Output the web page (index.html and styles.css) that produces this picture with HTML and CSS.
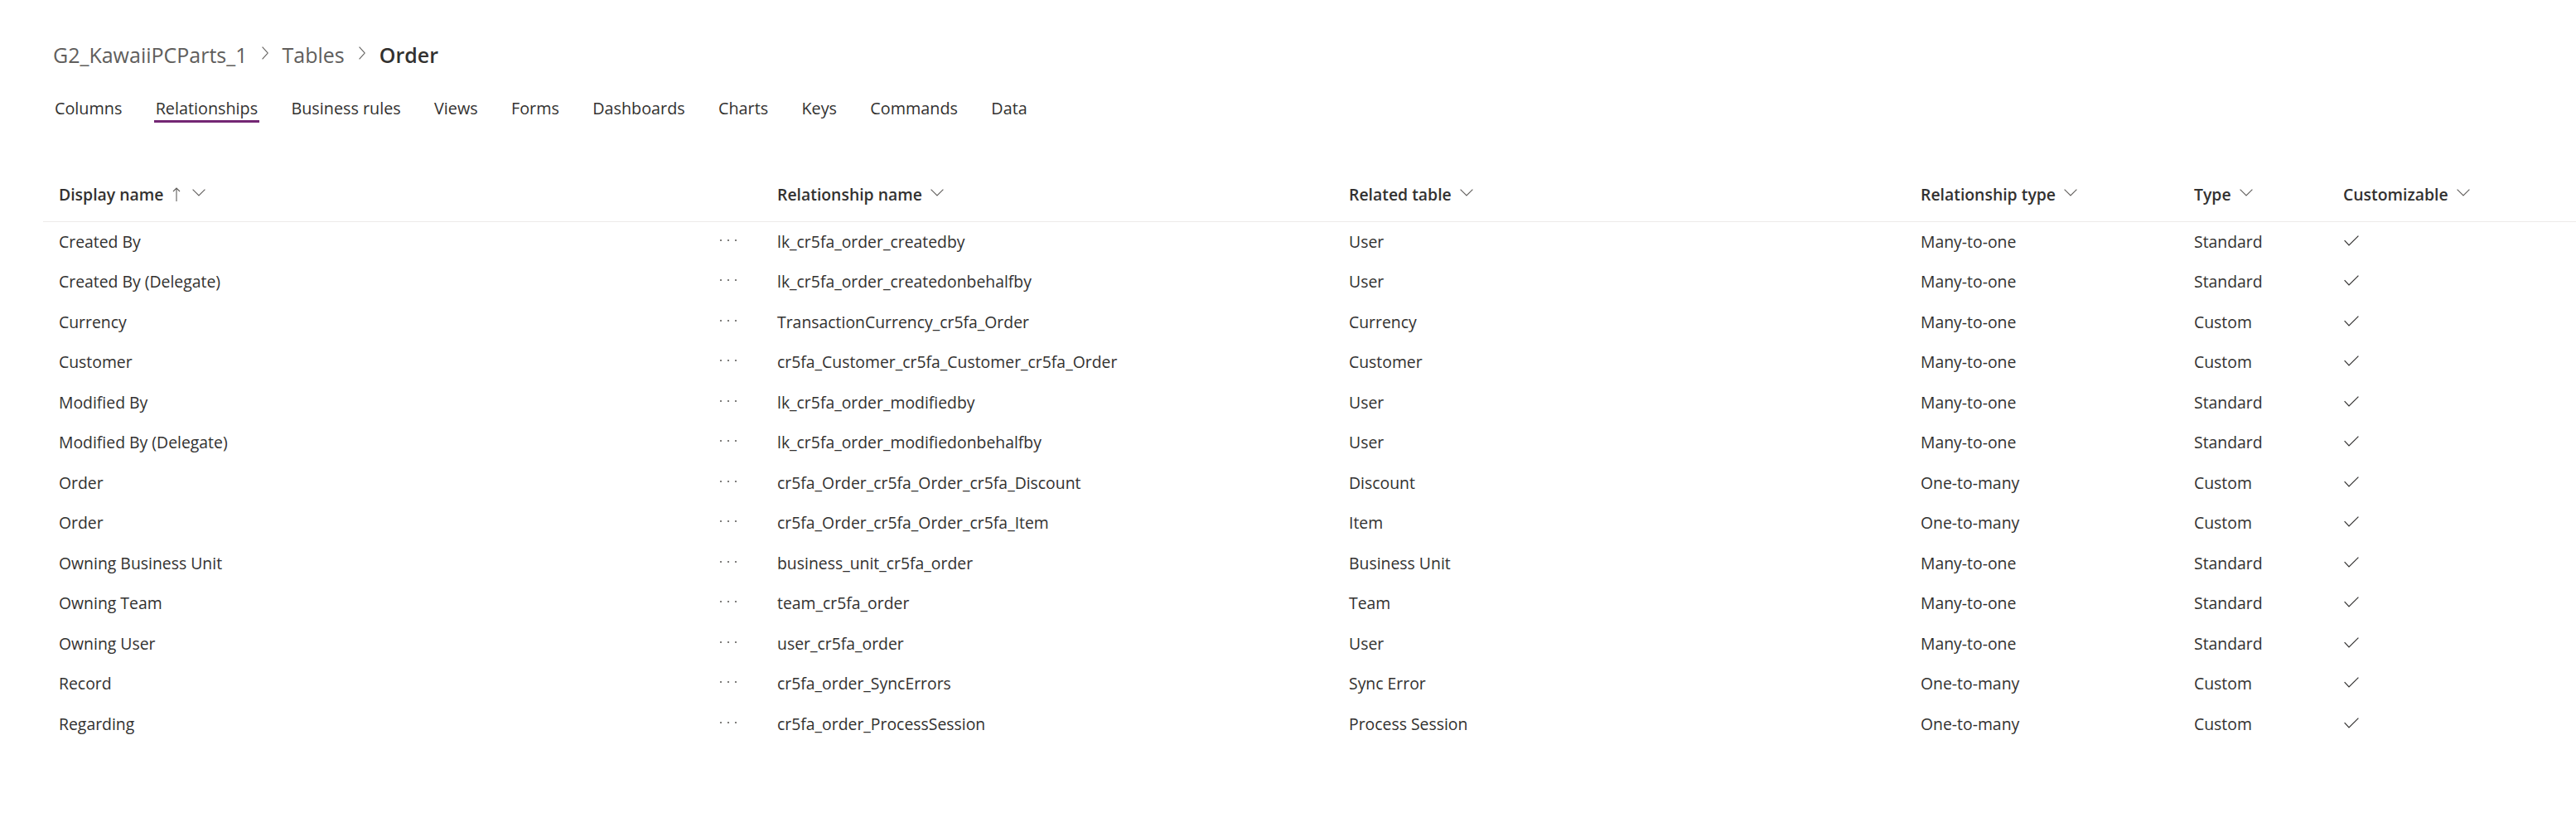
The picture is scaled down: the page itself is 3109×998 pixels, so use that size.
FILE: index.html
```html
<!DOCTYPE html>
<html lang="en">
<head>
<meta charset="utf-8">
<title>Order - Relationships</title>
<link rel="stylesheet" href="styles.css">
</head>
<body>
<div class="page">
  <nav class="breadcrumb">
    <span class="crumb">G2_KawaiiPCParts_1</span>
    <svg class="crumb-sep" width="8" height="16" viewBox="0 0 8 16"><path d="M0.6 0.6 L7.2 8 L0.6 15.4" fill="none" stroke="#605e5c" stroke-width="1.1"/></svg>
    <span class="crumb">Tables</span>
    <svg class="crumb-sep" width="8" height="16" viewBox="0 0 8 16"><path d="M0.6 0.6 L7.2 8 L0.6 15.4" fill="none" stroke="#605e5c" stroke-width="1.1"/></svg>
    <span class="crumb current">Order</span>
  </nav>

  <div class="tabs">
    <span class="tab">Columns</span>
    <span class="tab selected">Relationships</span>
    <span class="tab">Business rules</span>
    <span class="tab">Views</span>
    <span class="tab">Forms</span>
    <span class="tab">Dashboards</span>
    <span class="tab">Charts</span>
    <span class="tab">Keys</span>
    <span class="tab">Commands</span>
    <span class="tab">Data</span>
  </div>

  <div class="grid">
    <div class="row head">
      <div class="cell">Display name
        <svg class="sort" width="10" height="17" viewBox="0 0 10 17"><path d="M5 1 V17 M1 5 L5 1 L9 5" fill="none" stroke="#605e5c" stroke-width="1.1"/></svg>
        <svg class="chev after-sort" width="16" height="9" viewBox="0 0 16 9"><path d="M0.6 0.6 L8 8 L15.4 0.6" fill="none" stroke="#605e5c" stroke-width="1.1"/></svg>
      </div>
      <div class="cell">Relationship name <svg class="chev" width="16" height="9" viewBox="0 0 16 9"><path d="M0.6 0.6 L8 8 L15.4 0.6" fill="none" stroke="#605e5c" stroke-width="1.1"/></svg></div>
      <div class="cell">Related table <svg class="chev" width="16" height="9" viewBox="0 0 16 9"><path d="M0.6 0.6 L8 8 L15.4 0.6" fill="none" stroke="#605e5c" stroke-width="1.1"/></svg></div>
      <div class="cell">Relationship type <svg class="chev" width="16" height="9" viewBox="0 0 16 9"><path d="M0.6 0.6 L8 8 L15.4 0.6" fill="none" stroke="#605e5c" stroke-width="1.1"/></svg></div>
      <div class="cell">Type <svg class="chev" width="16" height="9" viewBox="0 0 16 9"><path d="M0.6 0.6 L8 8 L15.4 0.6" fill="none" stroke="#605e5c" stroke-width="1.1"/></svg></div>
      <div class="cell">Customizable <svg class="chev" width="16" height="9" viewBox="0 0 16 9"><path d="M0.6 0.6 L8 8 L15.4 0.6" fill="none" stroke="#605e5c" stroke-width="1.1"/></svg></div>
    </div>

    <div class="row">
      <div class="cell name">Created By<span class="more"><svg width="22" height="4" viewBox="0 0 22 4"><circle cx="2" cy="2" r="1.1"/><circle cx="11" cy="2" r="1.1"/><circle cx="20" cy="2" r="1.1"/></svg></span></div>
      <div class="cell">lk_cr5fa_order_createdby</div>
      <div class="cell">User</div>
      <div class="cell">Many-to-one</div>
      <div class="cell">Standard</div>
      <div class="cell"><svg class="check" width="18" height="13" viewBox="0 0 18 13"><path d="M0.6 6.2 L6 12 L17.4 0.6" fill="none" stroke="#323130" stroke-width="1.2"/></svg></div>
    </div>
    <div class="row">
      <div class="cell name">Created By (Delegate)<span class="more"><svg width="22" height="4" viewBox="0 0 22 4"><circle cx="2" cy="2" r="1.1"/><circle cx="11" cy="2" r="1.1"/><circle cx="20" cy="2" r="1.1"/></svg></span></div>
      <div class="cell">lk_cr5fa_order_createdonbehalfby</div>
      <div class="cell">User</div>
      <div class="cell">Many-to-one</div>
      <div class="cell">Standard</div>
      <div class="cell"><svg class="check" width="18" height="13" viewBox="0 0 18 13"><path d="M0.6 6.2 L6 12 L17.4 0.6" fill="none" stroke="#323130" stroke-width="1.2"/></svg></div>
    </div>
    <div class="row">
      <div class="cell name">Currency<span class="more"><svg width="22" height="4" viewBox="0 0 22 4"><circle cx="2" cy="2" r="1.1"/><circle cx="11" cy="2" r="1.1"/><circle cx="20" cy="2" r="1.1"/></svg></span></div>
      <div class="cell">TransactionCurrency_cr5fa_Order</div>
      <div class="cell">Currency</div>
      <div class="cell">Many-to-one</div>
      <div class="cell">Custom</div>
      <div class="cell"><svg class="check" width="18" height="13" viewBox="0 0 18 13"><path d="M0.6 6.2 L6 12 L17.4 0.6" fill="none" stroke="#323130" stroke-width="1.2"/></svg></div>
    </div>
    <div class="row">
      <div class="cell name">Customer<span class="more"><svg width="22" height="4" viewBox="0 0 22 4"><circle cx="2" cy="2" r="1.1"/><circle cx="11" cy="2" r="1.1"/><circle cx="20" cy="2" r="1.1"/></svg></span></div>
      <div class="cell">cr5fa_Customer_cr5fa_Customer_cr5fa_Order</div>
      <div class="cell">Customer</div>
      <div class="cell">Many-to-one</div>
      <div class="cell">Custom</div>
      <div class="cell"><svg class="check" width="18" height="13" viewBox="0 0 18 13"><path d="M0.6 6.2 L6 12 L17.4 0.6" fill="none" stroke="#323130" stroke-width="1.2"/></svg></div>
    </div>
    <div class="row">
      <div class="cell name">Modified By<span class="more"><svg width="22" height="4" viewBox="0 0 22 4"><circle cx="2" cy="2" r="1.1"/><circle cx="11" cy="2" r="1.1"/><circle cx="20" cy="2" r="1.1"/></svg></span></div>
      <div class="cell">lk_cr5fa_order_modifiedby</div>
      <div class="cell">User</div>
      <div class="cell">Many-to-one</div>
      <div class="cell">Standard</div>
      <div class="cell"><svg class="check" width="18" height="13" viewBox="0 0 18 13"><path d="M0.6 6.2 L6 12 L17.4 0.6" fill="none" stroke="#323130" stroke-width="1.2"/></svg></div>
    </div>
    <div class="row">
      <div class="cell name">Modified By (Delegate)<span class="more"><svg width="22" height="4" viewBox="0 0 22 4"><circle cx="2" cy="2" r="1.1"/><circle cx="11" cy="2" r="1.1"/><circle cx="20" cy="2" r="1.1"/></svg></span></div>
      <div class="cell">lk_cr5fa_order_modifiedonbehalfby</div>
      <div class="cell">User</div>
      <div class="cell">Many-to-one</div>
      <div class="cell">Standard</div>
      <div class="cell"><svg class="check" width="18" height="13" viewBox="0 0 18 13"><path d="M0.6 6.2 L6 12 L17.4 0.6" fill="none" stroke="#323130" stroke-width="1.2"/></svg></div>
    </div>
    <div class="row">
      <div class="cell name">Order<span class="more"><svg width="22" height="4" viewBox="0 0 22 4"><circle cx="2" cy="2" r="1.1"/><circle cx="11" cy="2" r="1.1"/><circle cx="20" cy="2" r="1.1"/></svg></span></div>
      <div class="cell">cr5fa_Order_cr5fa_Order_cr5fa_Discount</div>
      <div class="cell">Discount</div>
      <div class="cell">One-to-many</div>
      <div class="cell">Custom</div>
      <div class="cell"><svg class="check" width="18" height="13" viewBox="0 0 18 13"><path d="M0.6 6.2 L6 12 L17.4 0.6" fill="none" stroke="#323130" stroke-width="1.2"/></svg></div>
    </div>
    <div class="row">
      <div class="cell name">Order<span class="more"><svg width="22" height="4" viewBox="0 0 22 4"><circle cx="2" cy="2" r="1.1"/><circle cx="11" cy="2" r="1.1"/><circle cx="20" cy="2" r="1.1"/></svg></span></div>
      <div class="cell">cr5fa_Order_cr5fa_Order_cr5fa_Item</div>
      <div class="cell">Item</div>
      <div class="cell">One-to-many</div>
      <div class="cell">Custom</div>
      <div class="cell"><svg class="check" width="18" height="13" viewBox="0 0 18 13"><path d="M0.6 6.2 L6 12 L17.4 0.6" fill="none" stroke="#323130" stroke-width="1.2"/></svg></div>
    </div>
    <div class="row">
      <div class="cell name">Owning Business Unit<span class="more"><svg width="22" height="4" viewBox="0 0 22 4"><circle cx="2" cy="2" r="1.1"/><circle cx="11" cy="2" r="1.1"/><circle cx="20" cy="2" r="1.1"/></svg></span></div>
      <div class="cell">business_unit_cr5fa_order</div>
      <div class="cell">Business Unit</div>
      <div class="cell">Many-to-one</div>
      <div class="cell">Standard</div>
      <div class="cell"><svg class="check" width="18" height="13" viewBox="0 0 18 13"><path d="M0.6 6.2 L6 12 L17.4 0.6" fill="none" stroke="#323130" stroke-width="1.2"/></svg></div>
    </div>
    <div class="row">
      <div class="cell name">Owning Team<span class="more"><svg width="22" height="4" viewBox="0 0 22 4"><circle cx="2" cy="2" r="1.1"/><circle cx="11" cy="2" r="1.1"/><circle cx="20" cy="2" r="1.1"/></svg></span></div>
      <div class="cell">team_cr5fa_order</div>
      <div class="cell">Team</div>
      <div class="cell">Many-to-one</div>
      <div class="cell">Standard</div>
      <div class="cell"><svg class="check" width="18" height="13" viewBox="0 0 18 13"><path d="M0.6 6.2 L6 12 L17.4 0.6" fill="none" stroke="#323130" stroke-width="1.2"/></svg></div>
    </div>
    <div class="row">
      <div class="cell name">Owning User<span class="more"><svg width="22" height="4" viewBox="0 0 22 4"><circle cx="2" cy="2" r="1.1"/><circle cx="11" cy="2" r="1.1"/><circle cx="20" cy="2" r="1.1"/></svg></span></div>
      <div class="cell">user_cr5fa_order</div>
      <div class="cell">User</div>
      <div class="cell">Many-to-one</div>
      <div class="cell">Standard</div>
      <div class="cell"><svg class="check" width="18" height="13" viewBox="0 0 18 13"><path d="M0.6 6.2 L6 12 L17.4 0.6" fill="none" stroke="#323130" stroke-width="1.2"/></svg></div>
    </div>
    <div class="row">
      <div class="cell name">Record<span class="more"><svg width="22" height="4" viewBox="0 0 22 4"><circle cx="2" cy="2" r="1.1"/><circle cx="11" cy="2" r="1.1"/><circle cx="20" cy="2" r="1.1"/></svg></span></div>
      <div class="cell">cr5fa_order_SyncErrors</div>
      <div class="cell">Sync Error</div>
      <div class="cell">One-to-many</div>
      <div class="cell">Custom</div>
      <div class="cell"><svg class="check" width="18" height="13" viewBox="0 0 18 13"><path d="M0.6 6.2 L6 12 L17.4 0.6" fill="none" stroke="#323130" stroke-width="1.2"/></svg></div>
    </div>
    <div class="row">
      <div class="cell name">Regarding<span class="more"><svg width="22" height="4" viewBox="0 0 22 4"><circle cx="2" cy="2" r="1.1"/><circle cx="11" cy="2" r="1.1"/><circle cx="20" cy="2" r="1.1"/></svg></span></div>
      <div class="cell">cr5fa_order_ProcessSession</div>
      <div class="cell">Process Session</div>
      <div class="cell">One-to-many</div>
      <div class="cell">Custom</div>
      <div class="cell"><svg class="check" width="18" height="13" viewBox="0 0 18 13"><path d="M0.6 6.2 L6 12 L17.4 0.6" fill="none" stroke="#323130" stroke-width="1.2"/></svg></div>
    </div>
  </div>
</div>
</body>
</html>
```

FILE: styles.css
```css
* { box-sizing: border-box; }

html, body {
  margin: 0;
  padding: 0;
  background: #ffffff;
}

body {
  font-family: "Open Sans", "Noto Sans", "Liberation Sans", sans-serif;
  color: #323130;
}

.page {
  padding: 49px 0 0 52px;
}

.breadcrumb {
  display: flex;
  align-items: center;
  gap: 17px;
  padding-left: 12px;
  font-size: 25px;
  line-height: 34px;
  height: 34px;
}

.crumb {
  color: #605e5c;
  white-space: nowrap;
}

.crumb.current {
  color: #323130;
  font-weight: 600;
}

.crumb-sep {
  display: block;
  margin-bottom: 4px;
}

.tabs {
  display: flex;
  gap: 36.3px;
  margin-top: 34px;
  padding-left: 12px;
}

.tab {
  padding: 0 2px;
  font-size: 19.8px;
  line-height: 28px;
  color: #323130;
  border-bottom: 3px solid transparent;
  white-space: nowrap;
}

.tab.selected {
  border-bottom-color: #742774;
}

.grid {
  margin-top: 53px;
  font-size: 19.4px;
  line-height: 28px;
}

.row {
  display: grid;
  grid-template-columns: 867px 690px 690px 330px 180px 1fr;
  height: 48.5px;
  align-items: center;
}

.row.head {
  height: auto;
  align-items: start;
  padding: 20px 0 17.5px;
  border-bottom: 1px solid #edebe9;
  font-weight: 600;
}

.cell {
  display: flex;
  align-items: center;
  padding-left: 19px;
  white-space: nowrap;
}

.head .cell {
  color: #323130;
}

.chev {
  display: block;
  margin-left: 10px;
  margin-bottom: 6px;
}

.chev.after-sort {
  margin-left: 14px;
}

.sort {
  display: block;
  margin-left: 11px;
  margin-bottom: 1px;
}

.cell.name {
  padding-right: 29px;
}

.more {
  margin-left: auto;
  display: flex;
  align-items: center;
  margin-bottom: 4px;
}

.more svg {
  display: block;
  fill: #605e5c;
}

.check {
  display: block;
  margin-left: 1px;
  margin-bottom: 3px;
}
```
